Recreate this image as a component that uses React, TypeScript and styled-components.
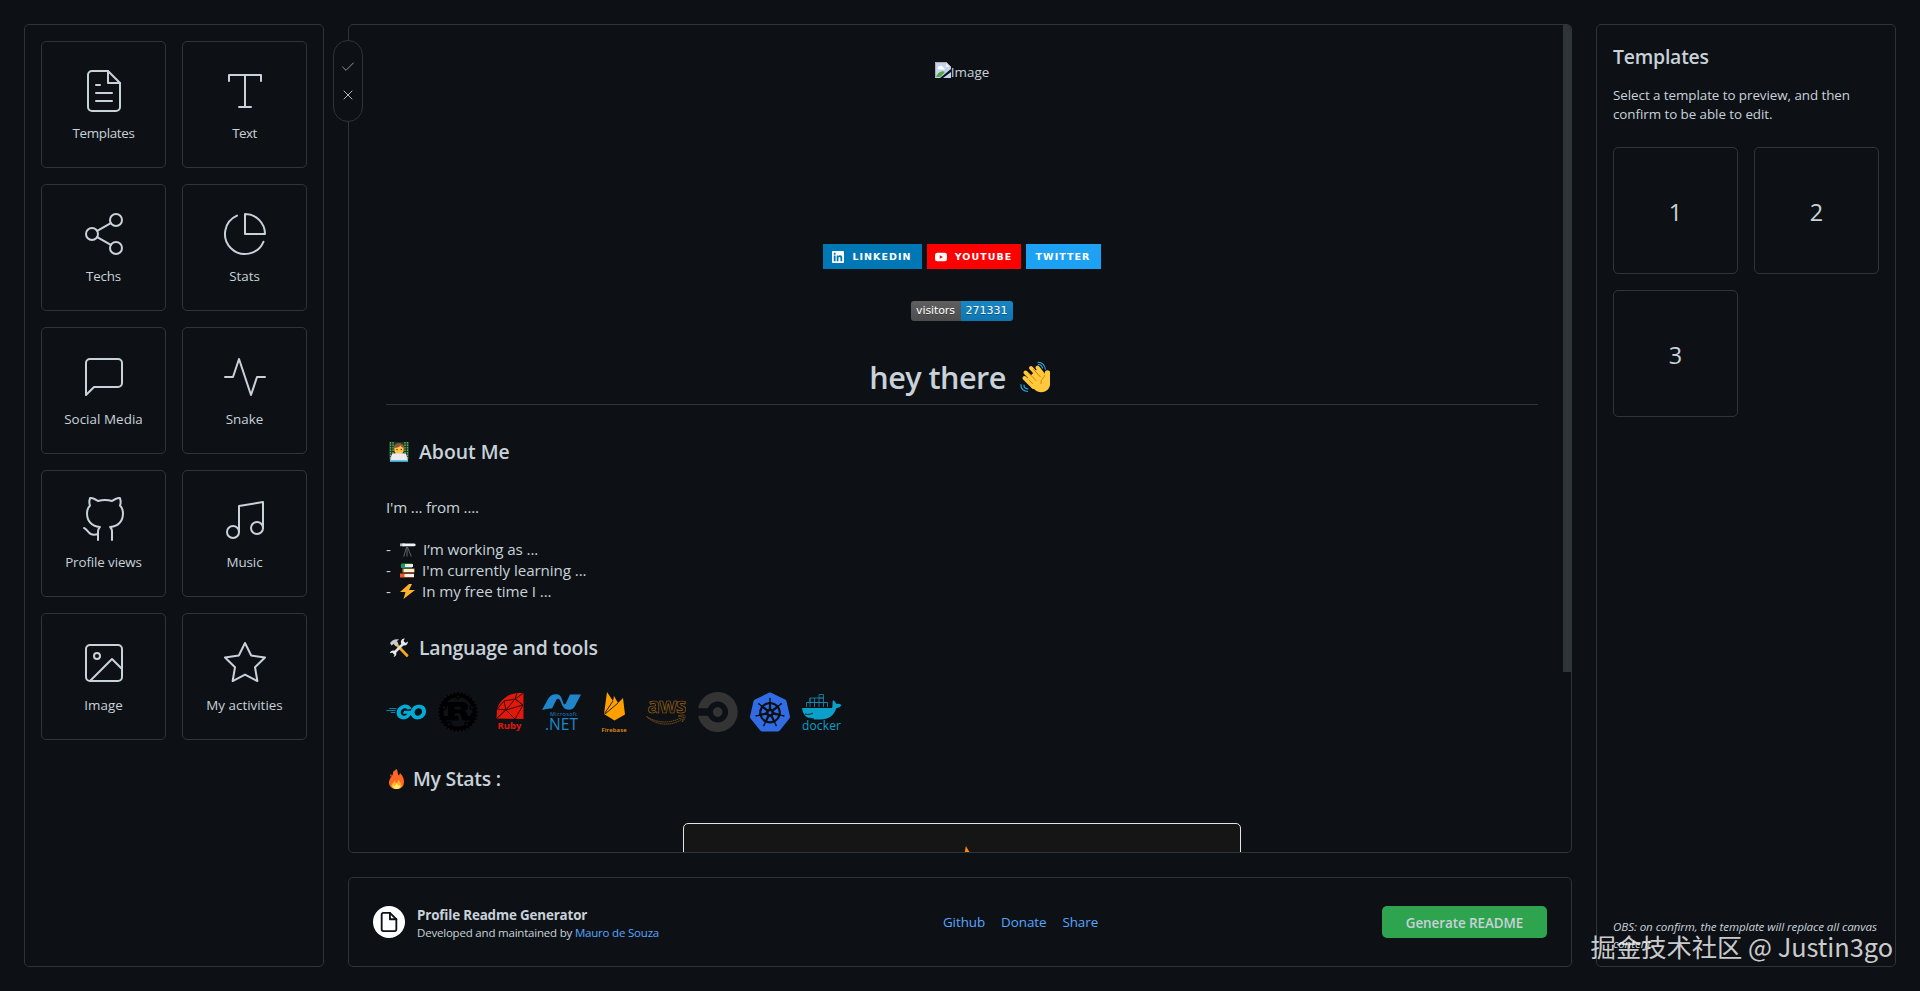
import React from "react";
import styled, { createGlobalStyle } from "styled-components";
import {
  FiActivity,
  FiCheck,
  FiFileText,
  FiGithub,
  FiImage,
  FiMessageSquare,
  FiMusic,
  FiPieChart,
  FiShare2,
  FiStar,
  FiType,
  FiX,
  FiFile,
} from "react-icons/fi";
import { SiCircleci, SiGo, SiKubernetes, SiLinkedin, SiRust, SiYoutube } from "react-icons/si";

const bg = "#0d1116";
const line = "#2f3439";
const text = "#c9d1d9";
const blue = "#58a6ff";

const GlobalStyle = createGlobalStyle`
  * { box-sizing: border-box; }
  body {
    margin: 0;
    background: ${bg};
    color: ${text};
    font-family: "Open Sans", "Noto Sans", sans-serif;
    overflow: hidden;
  }
  h1, h2, h3, p { margin: 0; }
`;

const Page = styled.div`
  position: relative;
  display: grid;
  grid-template-columns: 300px 1fr 300px;
  gap: 24px;
  height: 991px;
  padding: 24px;
`;

const Panel = styled.section`
  border: 1px solid ${line};
  border-radius: 5px;
  background: ${bg};
`;

const SidePanel = styled(Panel)`
  display: flex;
  flex-direction: column;
  padding: 16px;
`;

const TileGrid = styled.div`
  display: grid;
  grid-template-columns: 1fr 1fr;
  grid-auto-rows: 127px;
  gap: 16px;
`;

const Tile = styled.button<{ $tracking?: number }>`
  display: flex;
  flex-direction: column;
  align-items: center;
  justify-content: center;
  gap: 8px;
  padding: 0;
  border: 1px solid ${line};
  border-radius: 5px;
  background: transparent;
  color: ${text};
  font: 13.4px/20px "Open Sans", sans-serif;
  letter-spacing: ${(p) => p.$tracking ?? 0}px;
  svg {
    width: 48px;
    height: 48px;
    stroke-width: 1;
  }
`;

const NumberTile = styled(Tile)`
  font-size: 23.4px;
  line-height: 32px;
  padding-top: 2px;
`;

const Center = styled.main`
  position: relative;
  display: grid;
  grid-template-rows: 829px 90px;
  gap: 24px;
`;

const Toolbar = styled.div`
  position: absolute;
  left: -15px;
  top: 16px;
  z-index: 2;
  display: flex;
  flex-direction: column;
  align-items: center;
  justify-content: center;
  gap: 12px;
  width: 30px;
  height: 82px;
  border: 1px solid ${line};
  border-radius: 15px;
  background: ${bg};
  color: ${text};
  svg {
    width: 16px;
    height: 16px;
    stroke-width: 1.3;
  }
  svg:first-child { color: #a3aab1; }
`;

const Canvas = styled(Panel)`
  display: flex;
  overflow: hidden;
`;

const Readme = styled.article`
  flex: 1;
  display: flex;
  flex-direction: column;
  padding: 37px 25px 0 37px;
  > * { flex-shrink: 0; }
`;

const ScrollThumb = styled.div`
  width: 9px;
  height: 647px;
  margin-right: -1px;
  background: ${line};
`;

const BrokenImage = styled.div`
  display: flex;
  justify-content: center;
  align-items: flex-start;
  height: 182px;
  font-size: 13.4px;
  line-height: 20px;
  svg { flex: none; }
`;

const Badges = styled.div`
  display: flex;
  justify-content: center;
  gap: 5px;
  height: 25px;
`;

const Badge = styled.span<{ $color: string; $width: number }>`
  display: flex;
  align-items: center;
  justify-content: center;
  gap: 8px;
  width: ${(p) => p.$width}px;
  padding-right: 1px;
  background: ${(p) => p.$color};
  color: #fff;
  font: bold 9.5px "DejaVu Sans", sans-serif;
  letter-spacing: 1.05px;
  svg {
    flex: none;
    width: 12px;
    height: 12px;
  }
`;

const VisitorBadge = styled.div`
  display: flex;
  align-self: center;
  height: 20px;
  margin-top: 32px;
  border-radius: 3px;
  overflow: hidden;
  color: #fff;
  font: 11px/20px "DejaVu Sans", sans-serif;
  text-align: center;
  text-shadow: 0 1px 0 rgba(1, 1, 1, 0.3);
`;

const BadgePart = styled.span<{ $from: string; $to: string; $width: number; $tracking: number }>`
  width: ${(p) => p.$width}px;
  padding-right: 1px;
  letter-spacing: ${(p) => p.$tracking}px;
  background: linear-gradient(${(p) => p.$from}, ${(p) => p.$to});
`;

const Title = styled.h1`
  display: flex;
  justify-content: center;
  align-items: center;
  gap: 14px;
  height: 48px;
  margin-top: 36px;
  padding: 0 3px 7px 0;
  border-bottom: 1px solid ${line};
  font-size: 30.6px;
  font-weight: 600;
  letter-spacing: -0.55px;
  line-height: 40px;
`;

const Subtitle = styled.h3<{ $top?: number; $tracking?: number; $gap?: number }>`
  display: flex;
  align-items: center;
  gap: ${(p) => p.$gap ?? 10}px;
  height: 28px;
  margin-top: ${(p) => p.$top ?? 32}px;
  padding-left: 3px;
  font-size: 19.4px;
  font-weight: 600;
  letter-spacing: ${(p) => p.$tracking ?? -0.2}px;
  line-height: 28px;
`;

const Paragraph = styled.p`
  margin-top: 31px;
  font-size: 15.2px;
  letter-spacing: -0.18px;
  line-height: 21px;
`;

const List = styled.div`
  margin-top: 21px;
  font-size: 15.2px;
  letter-spacing: -0.09px;
  line-height: 21px;
`;

const Item = styled.div`
  display: flex;
  align-items: center;
  gap: 7px;
  height: 21px;
`;

const Dash = styled.span`
  width: 7px;
`;

const Techs = styled.div`
  display: flex;
  gap: 12px;
  height: 40px;
  margin-top: 30px;
  > svg {
    width: 40px;
    height: 40px;
  }
`;

const StatsCard = styled.div`
  align-self: center;
  display: flex;
  justify-content: center;
  width: 558px;
  height: 195px;
  margin-top: 30px;
  padding: 22px 0 0 7px;
  border: 1px solid #e4e2e2;
  border-radius: 5px;
  background: #151515;
`;

const Footer = styled(Panel)`
  display: flex;
  align-items: center;
  justify-content: space-between;
  padding: 0 24px;
`;

const Brand = styled.div`
  display: flex;
  align-items: center;
  gap: 12px;
`;

const BrandMark = styled.span`
  display: flex;
  align-items: center;
  justify-content: center;
  width: 32px;
  height: 32px;
  border-radius: 50%;
  background: #fff;
  color: #0d1117;
  svg {
    width: 22px;
    height: 22px;
  }
`;

const BrandName = styled.div`
  font-size: 13.4px;
  font-weight: 700;
  letter-spacing: -0.16px;
  line-height: 18px;
  padding-top: 3px;
`;

const BrandNote = styled.div`
  font-size: 11.5px;
  letter-spacing: -0.2px;
  line-height: 17px;
`;

const Link = styled.a`
  color: ${blue};
`;

const Links = styled.nav`
  display: flex;
  gap: 16px;
  font-size: 13.4px;
  letter-spacing: -0.06px;
  line-height: 20px;
`;

const GenerateButton = styled.button`
  width: 165px;
  height: 32px;
  padding: 1px 0 0;
  border: 0;
  border-radius: 5px;
  background: #2ea44f;
  color: ${text};
  font: 600 13.4px "Open Sans", sans-serif;
  letter-spacing: -0.05px;
`;

const PanelTitle = styled.h2`
  padding-top: 1px;
  font-size: 19.4px;
  font-weight: 600;
  letter-spacing: -0.2px;
  line-height: 30px;
`;

const PanelText = styled.p`
  margin: 14px 0 23px;
  font-size: 13.4px;
  letter-spacing: -0.06px;
  line-height: 19px;
  white-space: nowrap;
`;

const PanelNote = styled.p`
  margin-top: auto;
  margin-bottom: -2px;
  font-size: 11.6px;
  font-style: italic;
  letter-spacing: -0.08px;
  line-height: 17px;
  white-space: nowrap;
`;

const Watermark = styled.div`
  position: absolute;
  right: 27px;
  bottom: 27px;
  color: rgba(255, 255, 255, 0.8);
  font: 25.3px/36px "Noto Sans CJK SC", sans-serif;
  white-space: nowrap;
`;

const WaveEmoji = () => (
  <svg width="32" height="33" viewBox="0 0 32 33">
    <g fill="none" stroke="#ffc83d" strokeLinecap="round">
      <path d="M4.500 17l9 9M5.500 11.500l12 12M11 7l11 12M17.500 6.500l7 9" strokeWidth="4" />
    </g>
    <path d="M7 18 17.500 8 24.500 15 25 10.500Q27 8 30 10.500V24C29 31 20 34 14 28L5 18Z" fill="#ffc83d" />
    <path d="M9 12.500l7 7M13.500 8.500l7 7.500M24.500 14.500c0 3-4 3-3.500 8M9 19l3.500 3.500" fill="none" stroke="#d67d00" strokeWidth="1" strokeLinecap="round" />
    <path d="M18 1.200c4 0 7 3 7.300 7M18.500 3.500c2 0 3.500 1.500 4 3.500M1 23.500c-.3 4 2.500 6.500 6.500 7M4 24c-.2 2 1.500 3.500 4 4" fill="none" stroke="#28afea" strokeWidth="1.100" strokeLinecap="round" />
  </svg>
);

const CoderEmoji = () => (
  <svg width="20" height="20" viewBox="0 0 20 20">
    <path fill="#173b20" d="M0 0h20v17H0z" />
    <path d="M1.500 0v16M4 0v16M16 0v16M18.500 0v16" stroke="#68b46c" strokeWidth="1.300" strokeDasharray="1.500 1" />
    <circle cx="10" cy="6.500" r="5.600" fill="#8c5a3c" />
    <path d="M5.500 6c3 0 5-1 6-2.500 1 1.500 2 2 3 2.500v2a4.500 4.500 0 0 1-9 0z" fill="#ffc83d" />
    <circle cx="8" cy="7.500" r=".7" fill="#4b2b18" />
    <circle cx="12.300" cy="7.500" r=".7" fill="#4b2b18" />
    <path d="M1 19c0-6 3-8 9-8s9 2 9 8z" fill="#b9cfe2" />
    <path d="M3 11.500h14l1 7H2z" fill="#eeeaf0" />
    <path d="M1 18h18v1.800H1z" fill="#5ac3ea" />
  </svg>
);

const ToolsEmoji = () => (
  <svg width="20" height="20" viewBox="0 0 20 20" fill="none">
    <path d="M7.500 6.500 18 17.500" stroke="#f2a91c" strokeWidth="2.800" strokeLinecap="round" />
    <path d="M1 5C3 1.500 7 .5 10 1.500L8 3l1.500 3L7 8.500 4.500 6 2.500 7.500z" fill="#c9c9cc" />
    <path d="M4.500 15.500 15 5" stroke="#dfe1e5" strokeWidth="2.500" />
    <path d="M18.800 3.500a3.500 3.500 0 1 1-3-3L14.500 3l2 2zM.8 15a3.300 3.300 0 1 1 3.800 4l1-2.200-2-2z" fill="#e9ebee" />
  </svg>
);

const FireEmoji = () => (
  <svg width="15" height="20" viewBox="0 0 15 20">
    <path d="M7.500 0c2 3 .5 5 2.500 6.500L11 4c3 3 4 6 4 9 0 4.500-3 7-7.500 7S0 17.500 0 13.500C0 9 5 6.500 4 2.500 5.500 3 5 1.500 7.500 0z" fill="#ff6723" />
    <path d="M2 5.500v2" stroke="#ff6723" strokeWidth="1.300" />
    <path d="M5.500 11.500c1 1 1 2 1.500 3 1-1 2.500-2.500 2-4 2 2 3.500 4 3.500 6 0 2.500-2 3.500-5 3.500s-5-1-5-3.500c0-2 2.500-2.500 3-5z" fill="#ffb02e" />
    <path d="M4 16l2 1 1.500-3 2 3 1.500-1c0 3-1.500 4-3.500 4S4 19 4 16z" fill="#fff06a" />
  </svg>
);

const TelescopeEmoji = () => (
  <svg width="16" height="16" viewBox="0 0 17 16">
    <path d="M0 1h5v3H0z" fill="#b5b8bd" />
    <path d="M2.500 1H15l1.500.5v2L15 4H2.500z" fill="#f3f3f5" />
    <path d="M7.500 4v11M7 5 4 15M8 5l4 10" stroke="#777c82" strokeWidth=".8" />
  </svg>
);

const BooksEmoji = () => (
  <svg width="15" height="15" viewBox="0 0 15 15">
    <path d="M1 1.500Q1 .5 2 .5h10v4H2q-1 0-1-1z" fill="#16a34a" />
    <path d="M5 1h8v3H5z" fill="#f4ecd9" />
    <path d="M2.500 5.500h12v4h-12z" fill="#c69b2f" />
    <path d="M4 6h10v3H4z" fill="#fff1d7" />
    <path d="M0 10.500h14v4H0z" fill="#f05a28" />
    <path d="M4.500 11H14v3H4.500z" fill="#f3eef0" />
    <path d="M1 4.500h11" stroke="#1688a5" strokeWidth="1" />
  </svg>
);

const BoltEmoji = () => (
  <svg width="15" height="15" viewBox="0 0 15 15">
    <path d="M9 0 0 8h5.500L3.500 15 15 6H9L12 0z" fill="#ffb02e" />
  </svg>
);

const BrokenIcon = () => (
  <svg width="16" height="16" viewBox="0 0 16 16">
    <path d="M0 0h11l5 5v11H0z" fill="#c2d3ee" />
    <path d="M11 0v5h5z" fill="#f3f5f8" />
    <path d="M2.500 6.500c0-3 5-4 5.500-1 2 0 2 2 1 2H3z" fill="#fff" />
    <path d="M1 15c2-5 6-7 9-5l-5 5z" fill="#54a641" />
    <path d="M16 7v3L8 16H5z" fill={bg} />
    <path d="M.5 15.500V.5H11l4.500 4.500" fill="none" stroke="#a9adb3" />
  </svg>
);

const logoFont = '"Open Sans", sans-serif';

const RubyLogo = () => (
  <svg viewBox="0 0 40 40">
    <path d="M33.500 1v26L6.500 26.500 7 17C10 8 18 2 27 1z" fill="#e0190b" />
    <path d="M7 17l7-8 11-2 8.500-6M7 17l9 1 9-11 8 6-17 5L7 26l9-8 9 9 8-14-8-6 2-6M16 18l-2-9" fill="none" stroke="#3b0905" strokeWidth="1" />
    <text x="7.500" y="37" fontFamily={logoFont} fontSize="9.500" fontWeight="700" fill="#e0190b" textLength="24">Ruby</text>
  </svg>
);

const NetLogo = () => (
  <svg viewBox="0 0 40 40">
    <path d="M0 18 6 7C8 3 12 1.500 16 2.500c3.500 1 4 5.500 5.500 9 .8 1.500 1.800 1 2.500-.5l4-8.500h11L33 14c-2 4-6 4.500-9.500 3-3.500-2-4-6.500-6-9.500-1.200-1.500-2.500-1-3.500 1l-4 8Q6 16 0 18z" fill="#1f86c9" />
    <text x="8" y="24" fontFamily={logoFont} fontSize="5.500" fill="#1f86c9" textLength="27">Microsoft</text>
    <text x="3" y="37.500" fontFamily={logoFont} fontSize="16.500" fill="#1f86c9" textLength="33" lengthAdjust="spacingAndGlyphs">.NET</text>
  </svg>
);

const FirebaseLogo = () => (
  <svg viewBox="0 0 40 40">
    <path d="M10 22 13 0l6 9 1-5 4 7 5-5 2 16.500-10.500 6z" fill="#ffa000" />
    <path d="M10.500 21.500 19 9M11 22 24 11" stroke={bg} strokeWidth=".9" />
    <text x="7.500" y="39.500" fontFamily={logoFont} fontSize="5.800" fontWeight="600" fill="#f39a00" textLength="25">Firebase</text>
  </svg>
);

const AwsLogo = () => (
  <svg viewBox="0 0 40 40" fill="none" stroke="#9a6312" strokeWidth=".7">
    <text x="1.500" y="21" fontFamily={logoFont} fontSize="21" fontWeight="700" letterSpacing="-1" textLength="38" lengthAdjust="spacingAndGlyphs">aws</text>
    <path d="M.5 24.500c11 7 24 7 34 1.500l1 1.500c-10 7-26 6-35-3zM32 24c3-1.500 6-1 7-.5.500 2-1 5-3 6.500l1.500-5z" strokeDasharray="1.600 .5" />
  </svg>
);

const DockerLogo = () => (
  <svg viewBox="0 0 40 40">
    <path d="M0 16h30c1-2 0-5 1-8 2 1 3 3 3 4 2-.5 4-.3 5.500 1-1 2-3 3-5 3-3 8-8 11.500-16 11.500C7 28 1 25 0 16z" fill="#0c9fc9" />
    <path d="M4.500 15v-4.500h21V15M8 10.500V6h14M8 15V6m4.500 9V6M17 15V2.500h4.500V15M4.500 10.500h21M17 6h4.500" fill="none" stroke="#128eb2" strokeWidth=".8" />
    <path d="M3 22c4 1 6 0 8-1M7 26l5 1" fill="none" stroke={bg} strokeWidth=".9" />
    <text x="0" y="37.500" fontFamily={logoFont} fontSize="12" fill="#0c9fc9" textLength="39">docker</text>
  </svg>
);

const FlameTip = () => (
  <svg width="16" height="20" viewBox="0 0 16 20">
    <path d="M8 0c1 3 4 5 4 9 0 7-11 7-11-1l.500-2C3 8 5 9 6.500 7 7.500 5 7 2 8 0z" fill="#fb8c00" />
  </svg>
);

const tools: [string, React.ComponentType, number][] = [
  ["Templates", FiFileText, -0.34],
  ["Text", FiType, -0.5],
  ["Techs", FiShare2, -0.15],
  ["Stats", FiPieChart, 0],
  ["Social Media", FiMessageSquare, 0.05],
  ["Snake", FiActivity, 0],
  ["Profile views", FiGithub, -0.12],
  ["Music", FiMusic, -0.1],
  ["Image", FiImage, 0],
  ["My activities", FiStar, 0],
];

export default function App() {
  return (
    <>
      <GlobalStyle />
      <Page>
        <SidePanel>
          <TileGrid>
            {tools.map(([label, Icon, tracking]) => (
              <Tile key={label} $tracking={tracking}>
                <Icon />
                {label}
              </Tile>
            ))}
          </TileGrid>
        </SidePanel>

        <Center>
          <Toolbar>
            <FiCheck />
            <FiX />
          </Toolbar>
          <Canvas>
            <Readme>
              <BrokenImage>
                <BrokenIcon />
                Image
              </BrokenImage>
              <Badges>
                <Badge $color="#0077b5" $width={99}>
                  <SiLinkedin />
                  LINKEDIN
                </Badge>
                <Badge $color="#ff0000" $width={94}>
                  <SiYoutube />
                  YOUTUBE
                </Badge>
                <Badge $color="#1da1f2" $width={75}>
                  TWITTER
                </Badge>
              </Badges>
              <VisitorBadge>
                <BadgePart $from="#5f5f5f" $to="#4d4d4d" $width={50} $tracking={-0.1}>visitors</BadgePart>
                <BadgePart $from="#1886c4" $to="#0f75af" $width={52} $tracking={0}>271331</BadgePart>
              </VisitorBadge>
              <Title>
                hey there
                <WaveEmoji />
              </Title>

              <Subtitle $top={33} $tracking={0}>
                <CoderEmoji />
                About Me
              </Subtitle>
              <Paragraph>I'm ... from ....</Paragraph>
              <List>
                <Item>
                  <Dash>-</Dash>
                  <TelescopeEmoji />
                  I’m working as ...
                </Item>
                <Item>
                  <Dash>-</Dash>
                  <BooksEmoji />
                  I'm currently learning ...
                </Item>
                <Item>
                  <Dash>-</Dash>
                  <BoltEmoji />
                  In my free time I ...
                </Item>
              </List>

              <Subtitle>
                <ToolsEmoji />
                Language and tools
              </Subtitle>
              <Techs>
                <SiGo color="#00acd7" />
                <SiRust color="#000" />
                <RubyLogo />
                <NetLogo />
                <FirebaseLogo />
                <AwsLogo />
                <SiCircleci color="#343434" />
                <SiKubernetes color="#326ce5" />
                <DockerLogo />
              </Techs>

              <Subtitle $top={33} $tracking={-0.25} $gap={9}>
                <FireEmoji />
                My Stats :
              </Subtitle>
              <StatsCard>
                <FlameTip />
              </StatsCard>
            </Readme>
            <ScrollThumb />
          </Canvas>

          <Footer>
            <Brand>
              <BrandMark>
                <FiFile />
              </BrandMark>
              <div>
                <BrandName>Profile Readme Generator</BrandName>
                <BrandNote>
                  Developed and maintained by <Link>Mauro de Souza</Link>
                </BrandNote>
              </div>
            </Brand>
            <Links>
              <Link>Github</Link>
              <Link>Donate</Link>
              <Link>Share</Link>
            </Links>
            <GenerateButton>Generate README</GenerateButton>
          </Footer>
        </Center>

        <SidePanel>
          <PanelTitle>Templates</PanelTitle>
          <PanelText>
            Select a template to preview, and then
            <br />
            confirm to be able to edit.
          </PanelText>
          <TileGrid>
            <NumberTile>1</NumberTile>
            <NumberTile>2</NumberTile>
            <NumberTile>3</NumberTile>
          </TileGrid>
          <PanelNote>
            OBS: on confirm, the template will replace all canvas
            <br />
            content.
          </PanelNote>
        </SidePanel>
        <Watermark>掘金技术社区 @ Justin3go</Watermark>
      </Page>
    </>
  );
}
